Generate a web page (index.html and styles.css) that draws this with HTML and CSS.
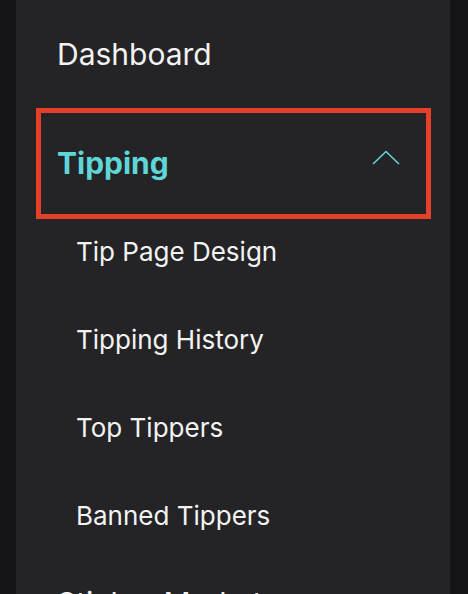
FILE: index.html
```html
<!DOCTYPE html>
<html lang="en">
<head>
    <meta charset="UTF-8">
    <meta name="viewport" content="width=device-width, initial-scale=1.0">
    <title>Sidebar Menu</title>
    <link rel="stylesheet" href="styles.css">
</head>
<body>
    <nav class="sidebar">
        <a class="nav-item" href="#">Dashboard</a>

        <div class="nav-group">
            <button class="group-head">
                <span>Tipping</span>
                <svg class="chevron" width="28" height="15" viewBox="0 0 28 15">
                    <polyline points="1,14 14,1.5 27,14" fill="none" stroke="currentColor" stroke-width="1.6"/>
                </svg>
            </button>
        </div>

        <ul class="sub-menu">
            <li><a href="#">Tip Page Design</a></li>
            <li><a href="#">Tipping History</a></li>
            <li><a href="#">Top Tippers</a></li>
            <li><a href="#">Banned Tippers</a></li>
        </ul>

        <a class="nav-item nav-item-next" href="#">Sticker Market</a>
    </nav>
</body>
</html>
```

FILE: styles.css
```css
/* Базові стилі */
body {
    margin: 0;
    background: #151517;
    font-family: 'Inter', 'Liberation Sans', sans-serif;
    color: #f3f3f3;
    overflow: hidden;
}

.sidebar {
    margin: 0 18px 0 16px;
    padding-top: 36px;
    min-height: 100vh;
    background: #242426;
}

.nav-item {
    display: block;
    padding-left: 41px;
    font-size: 30px;
    line-height: 36px;
    color: #f3f3f3;
    text-decoration: none;
}

.nav-group {
    margin: 36px 19px 0 20px;
    border: 5px solid #e5412a;
}

.group-head {
    display: flex;
    align-items: center;
    justify-content: space-between;
    width: 100%;
    padding: 32px 26px 33px 16px;
    border: none;
    background: none;
    font-family: inherit;
    font-size: 30px;
    font-weight: 700;
    line-height: 36px;
    color: #5fd6d8;
    cursor: pointer;
}

.chevron {
    margin-top: -12px;
}

.sub-menu {
    list-style: none;
    margin: 16px 0 0;
    padding: 0 0 0 60px;
    display: flex;
    flex-direction: column;
    gap: 54px;
}

.sub-menu a {
    display: block;
    font-size: 26px;
    line-height: 34px;
    color: #f3f3f3;
    text-decoration: none;
}

.nav-item-next {
    margin-top: 52px;
}
```
